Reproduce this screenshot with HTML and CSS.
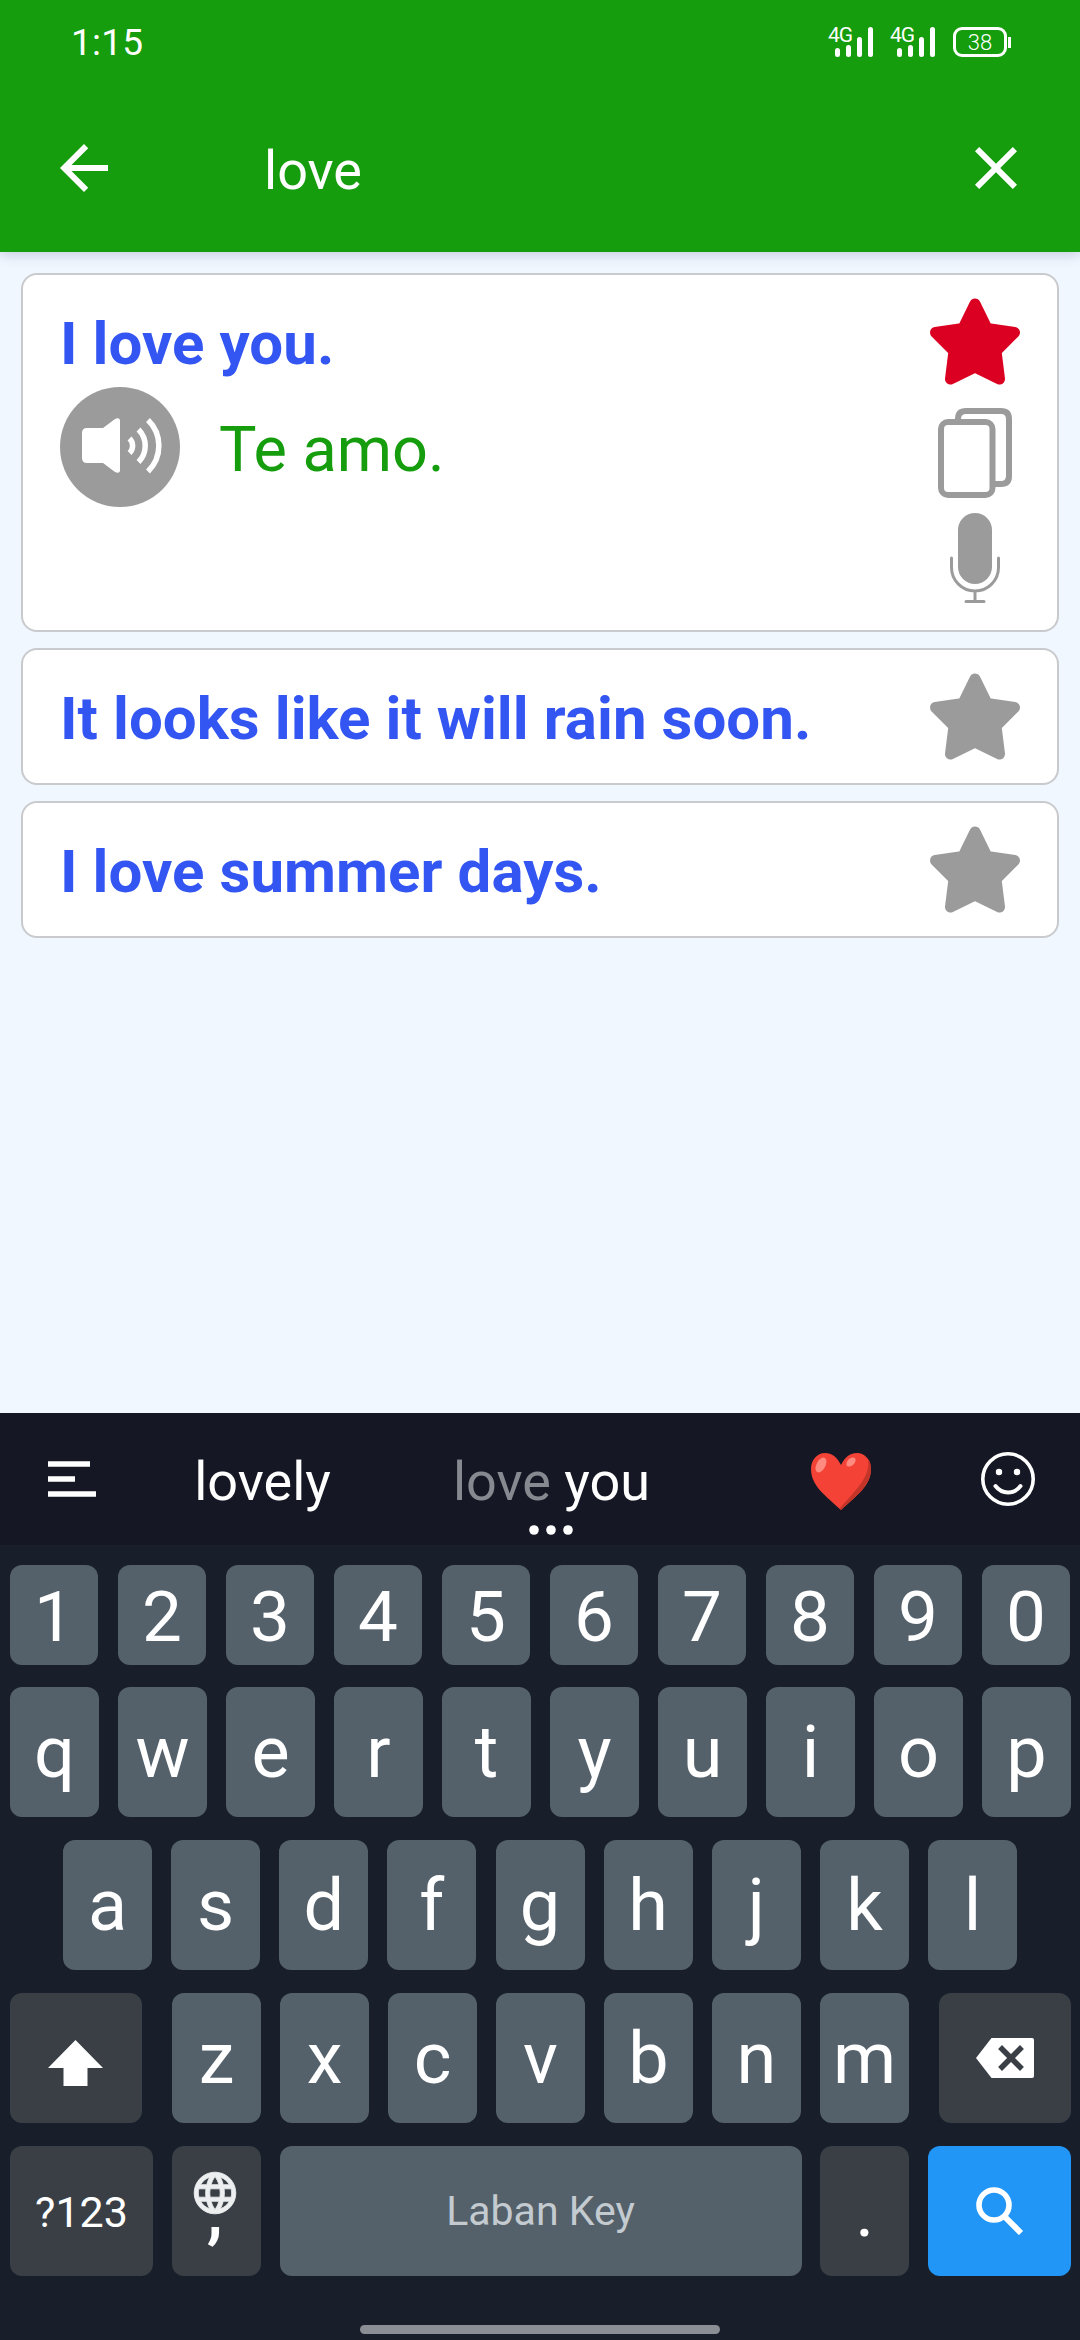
FILE: index.html
```html
<html>
    <head>
        <meta charset="utf-8">
        <title>Phrases</title>
        <link rel="stylesheet" href="styles.css">
    </head>
    <body class="body">
        <svg class="defs" width="0" height="0">
            <symbol id="star" viewBox="0 0 90 90">
                <path d="M45 6L57 30.4L84.5 34.5L66 53L69.5 81L45 69L20.5 81L24 53L5.5 34.5L33 30.4Z" fill="currentColor" stroke="currentColor" stroke-width="11" stroke-linejoin="round"/>
            </symbol>
            <symbol id="signal" viewBox="0 0 38 30">
                <path d="M2.5 23.5v4M13.5 20.5v7M24.5 12.5v15M35.5 2.5v25" stroke="#fff" stroke-width="5" stroke-linecap="round"/>
            </symbol>
        </svg>

        <div class="head">
            <div class="status">
                <span class="time">1:15</span>
                <div class="signal">
                    <span class="net">4G</span>
                    <svg width="38" height="30"><use href="#signal"/></svg>
                </div>
                <div class="signal">
                    <span class="net">4G</span>
                    <svg width="38" height="30"><use href="#signal"/></svg>
                </div>
                <div class="battery">38</div>
                <div class="battery_tip"></div>
            </div>
            <div class="search">
                <svg width="72" height="72" viewBox="0 0 24 24"><path d="M20 11H7.83l5.59-5.59L12 4l-8 8 8 8 1.41-1.41L7.83 13H20v-2z" fill="#fff"/></svg>
                <span class="query">love</span>
                <svg width="72" height="72" viewBox="0 0 24 24"><path d="M19 6.41L17.59 5 12 10.59 6.41 5 5 6.41 10.59 12 5 17.59 6.41 19 12 13.41 17.59 19 19 17.59 13.41 12z" fill="#fff"/></svg>
            </div>
        </div>

        <div class="list">
            <div class="card card_open">
                <div class="phrase">
                    <div class="english">I love you.</div>
                    <div class="answer">
                        <svg width="120" height="120" viewBox="0 0 120 120">
                            <circle cx="60" cy="60" r="60" fill="#9b9b9b"/>
                            <path d="M27 41h16l12-9q5-2 5 2v49q0 4-5 2l-12-9H27q-5 0-5-5V46q0-5 5-5z" fill="#fff"/>
                            <path d="M69.500 51.500a10 10 0 0 1 0 14.500M78.500 42.500a23 23 0 0 1 0 32.500M88 33a36 36 0 0 1 0 51.500" fill="none" stroke="#fff" stroke-width="5.500"/>
                        </svg>
                        <span class="spanish">Te amo.</span>
                    </div>
                </div>
                <div class="icons">
                    <svg class="star red" width="90" height="90"><use href="#star"/></svg>
                    <svg width="90" height="95" viewBox="0 0 90 95">
                        <path d="M28 18v-2q0-8 8-8h35q8 0 8 8v57q0 8-8 8h-7" fill="none" stroke="#9b9b9b" stroke-width="6"/>
                        <rect x="11" y="19" width="51.500" height="73" rx="7" fill="#fff" stroke="#9b9b9b" stroke-width="6"/>
                    </svg>
                    <svg width="90" height="90" viewBox="0 0 90 90">
                        <rect x="28" width="34" height="71" rx="17" fill="#9b9b9b"/>
                        <path d="M21.500 45v9.500a23.500 23.500 0 0 0 47 0V45M45 78v10M36 88.500h18" fill="none" stroke="#9b9b9b" stroke-width="3" stroke-linecap="round"/>
                    </svg>
                </div>
            </div>
            <div class="card">
                <div class="english">It looks like it will rain soon.</div>
                <svg class="star" width="90" height="90"><use href="#star"/></svg>
            </div>
            <div class="card">
                <div class="english">I love summer days.</div>
                <svg class="star" width="90" height="90"><use href="#star"/></svg>
            </div>
        </div>

        <div class="keyboard">
            <div class="words">
                <div class="menu">
                    <svg width="48" height="36" viewBox="0 0 48 36"><path d="M0 3h42M0 18h27M0 33h48" stroke="#fff" stroke-width="5.500"/></svg>
                </div>
                <div class="word">lovely</div>
                <div class="word"><span class="typed">love&nbsp;</span>you
                    <svg class="dots" width="44" height="10"><circle cx="5" cy="5" r="4.800" fill="#fff"/><circle cx="22" cy="5" r="4.800" fill="#fff"/><circle cx="39" cy="5" r="4.800" fill="#fff"/></svg>
                </div>
                <div class="word heart">
                    <svg width="60" height="57" viewBox="0 0 60 57">
                        <path d="M30 12C34 4 39 0 46 0c8 0 14 7 14 16 0 17-15 27-30 41C15 43 0 33 0 16 0 7 6 0 14 0c7 0 12 4 16 12z" fill="#f44336"/>
                        <path d="M57 6c3 17-12 31-28 49l1 2c15-14 30-24 30-41 0-4-1-8-3-10z" fill="#c33529"/>
                        <ellipse cx="10" cy="12" rx="4.500" ry="8" transform="rotate(28 10 12)" fill="#ff8a80"/>
                        <ellipse cx="40" cy="9" rx="5.500" ry="3.500" transform="rotate(-45 40 9)" fill="#ff8a80"/>
                    </svg>
                </div>
                <div class="smile">
                    <svg width="54" height="54" viewBox="0 0 54 54">
                        <circle cx="27" cy="27" r="25.200" fill="none" stroke="#fff" stroke-width="3.600"/>
                        <circle cx="18" cy="20" r="3.200" fill="#fff"/>
                        <circle cx="36" cy="20" r="3.200" fill="#fff"/>
                        <path d="M14.500 34q5 6.500 12.500 6.500T39.500 34" fill="none" stroke="#fff" stroke-width="4" stroke-linecap="round"/>
                    </svg>
                </div>
            </div>
            <div class="keys numbers">
                <div class="key">1</div><div class="key">2</div><div class="key">3</div><div class="key">4</div><div class="key">5</div>
                <div class="key">6</div><div class="key">7</div><div class="key">8</div><div class="key">9</div><div class="key">0</div>
            </div>
            <div class="keys">
                <div class="key">q</div><div class="key">w</div><div class="key">e</div><div class="key">r</div><div class="key">t</div>
                <div class="key">y</div><div class="key">u</div><div class="key">i</div><div class="key">o</div><div class="key">p</div>
            </div>
            <div class="keys middle">
                <div class="key">a</div><div class="key">s</div><div class="key">d</div><div class="key">f</div><div class="key">g</div>
                <div class="key">h</div><div class="key">j</div><div class="key">k</div><div class="key">l</div>
            </div>
            <div class="keys">
                <div class="key dark shift">
                    <svg width="55" height="46" viewBox="0 0 55 46"><path d="M27.500 0L55 28H39.500v18h-24V28H0z" fill="#fff"/></svg>
                </div>
                <div class="key">z</div><div class="key">x</div><div class="key">c</div><div class="key">v</div>
                <div class="key">b</div><div class="key">n</div><div class="key">m</div>
                <div class="key dark delete">
                    <svg width="58" height="40" viewBox="0 0 58 40">
                        <path d="M15.500 0H56q2 0 2 2v36q0 2-2 2H15.500L0 20z" fill="#fff"/>
                        <path d="M26 11l18 18M44 11L26 29" stroke="#393f45" stroke-width="5.500" stroke-linecap="square"/>
                    </svg>
                </div>
            </div>
            <div class="keys">
                <div class="key dark symbols">?123</div>
                <div class="key dark comma">
                    <svg width="50" height="50" viewBox="0 0 24 24"><path d="M11.990 2C6.470 2 2 6.480 2 12s4.470 10 9.990 10C17.520 22 22 17.520 22 12S17.520 2 11.990 2zm6.930 6h-2.950c-.32-1.250-.78-2.450-1.380-3.560 1.840.63 3.370 1.910 4.330 3.560zM12 4.040c.83 1.200 1.480 2.530 1.910 3.960h-3.820c.43-1.430 1.080-2.760 1.910-3.960zM4.260 14C4.100 13.360 4 12.690 4 12s.1-1.360.26-2h3.380c-.08.66-.14 1.320-.14 2 0 .68.06 1.340.14 2H4.260zm.82 2h2.950c.32 1.250.78 2.450 1.380 3.560-1.840-.63-3.370-1.900-4.330-3.560zm2.950-8H5.080c.96-1.660 2.490-2.930 4.330-3.560C8.810 5.550 8.350 6.750 8.030 8zM12 19.960c-.83-1.200-1.480-2.530-1.910-3.960h3.820c-.43 1.430-1.080 2.760-1.910 3.960zM14.340 14H9.660c-.09-.66-.16-1.320-.16-2 0-.68.07-1.350.16-2h4.680c.09.65.16 1.320.16 2 0 .68-.07 1.340-.16 2zm.25 5.560c.6-1.110 1.060-2.310 1.380-3.560h2.950c-.96 1.650-2.490 2.930-4.330 3.560zM16.360 14c.08-.66.14-1.320.14-2 0-.68-.06-1.340-.14-2h3.380c.16.64.26 1.310.26 2s-.1 1.360-.26 2h-3.380z" fill="#eceef0" stroke="#eceef0" stroke-width=".4"/></svg>
                    <span class="mark">,</span>
                </div>
                <div class="key space">Laban Key</div>
                <div class="key dark dot">.</div>
                <div class="key go">
                    <svg width="48" height="48" viewBox="0 0 48 48">
                        <circle cx="18" cy="18" r="15" fill="none" stroke="#fff" stroke-width="5.600"/>
                        <path d="M29 30L45 46" stroke="#fff" stroke-width="6"/>
                    </svg>
                </div>
            </div>
            <div class="home"></div>
        </div>
    </body>
</html>
```
FILE: styles.css
```css
*{
    box-sizing: border-box;
}
.body{
    margin:0;
    width:1080px;
    height:2340px;
    display:flex;
    flex-direction:column;
    overflow:hidden;
    background-color:#f0f7ff;
    font-family:Roboto, "Liberation Sans", sans-serif;
    color:#fff;
}
svg{
    display:block;
    flex:none;
}
.defs{
    position:absolute;
}

/* green top bar */
.head{
    height:252px;
    flex:none;
    background-color:#159d0d;
    box-shadow:0 2px 12px rgba(60,60,100,0.25);
}
.status{
    display:flex;
    align-items:center;
    height:84px;
    padding:0 69px 0 71px;
}
.time{
    flex:1;
    font-size:37px;
    letter-spacing:0.2px;
}
.signal{
    position:relative;
    margin-right:24px;
}
.signal + .battery{
    margin-left:-6px;
}
.net{
    position:absolute;
    left:-7px;
    top:-4px;
    font-size:21px;
    line-height:24px;
    letter-spacing:-1px;
}
.battery{
    width:54px;
    height:30px;
    border:3px solid #fff;
    border-radius:9px;
    font-size:22px;
    font-weight:300;
    line-height:25px;
    text-align:center;
}
.battery_tip{
    width:3px;
    height:11px;
    margin-left:1px;
    background-color:#fff;
}
.search{
    display:flex;
    align-items:center;
    height:168px;
    padding:0 48px;
}
.query{
    flex:1;
    padding:5px 0 0 144px;
    font-size:54px;
}

/* phrases */
.list{
    flex:1;
    display:flex;
    flex-direction:column;
    gap:16px;
    padding:21px;
}
.card{
    display:flex;
    justify-content:space-between;
    height:137px;
    padding:23px 37px 0;
    background-color:#fff;
    border:2px solid #c8cacd;
    border-radius:16px;
}
.card_open{
    height:359px;
}
.english{
    padding-top:11px;
    font-size:60px;
    line-height:70px;
    letter-spacing:0.06px;
    font-weight:bold;
    color:#3355f2;
}
.answer{
    display:flex;
    align-items:center;
    margin-top:8px;
}
.spanish{
    padding:5px 0 0 39px;
    font-size:63px;
    color:#159d0d;
}
.star{
    color:#9b9b9b;
}
.red{
    color:#db0021;
}
.icons{
    display:flex;
    flex-direction:column;
    gap:15px;
}

/* keyboard */
.keyboard{
    height:927px;
    flex:none;
    background-color:#181f2b;
}
.words{
    display:grid;
    grid-template-columns:119px 289px 289px 284px 99px;
    align-items:center;
    height:132px;
    margin-bottom:20px;
    background-color:#151824;
}
.menu{
    padding-left:48px;
}
.word{
    position:relative;
    display:flex;
    justify-content:center;
    padding:5px 2px 0 0;
    font-size:54px;
}
.heart{
    padding:4px 0 0 4px;
}
.typed{
    color:#878991;
}
.dots{
    position:absolute;
    left:121px;
    bottom:-22px;
}
.keys{
    display:flex;
    justify-content:space-between;
    height:130px;
    margin-bottom:23px;
    padding:0 9px 0 10px;
}
.key{
    display:flex;
    align-items:center;
    justify-content:center;
    width:89px;
    background-color:#54616b;
    border-radius:12px;
    font-size:72px;
}
.numbers{
    height:100px;
    margin-bottom:22px;
    padding-right:10px;
}
.numbers .key{
    width:88px;
    padding-top:2px;
    font-size:71px;
}
.middle{
    padding:0 63px;
}
.dark{
    background-color:#393f45;
}
.shift{
    width:132px;
    margin-right:11px;
    padding:9px 2px 0 0;
}
.delete{
    width:132px;
    margin-left:11px;
}
.symbols{
    width:143px;
    font-size:43px;
    padding-top:2px;
}
.comma{
    flex-direction:column;
    justify-content:flex-start;
    padding-top:22px;
    padding-right:3px;
}
.mark{
    font-size:72px;
    line-height:72px;
    margin-top:-43px;
    font-weight:500;
}
.space{
    width:522px;
    font-size:41px;
    color:#c4cbd0;
}
.go{
    width:143px;
    background-color:#2196f6;
}
.home{
    width:360px;
    height:9px;
    margin:49px auto 0;
    border-radius:5px;
    background-color:#8b8e95;
}
```
